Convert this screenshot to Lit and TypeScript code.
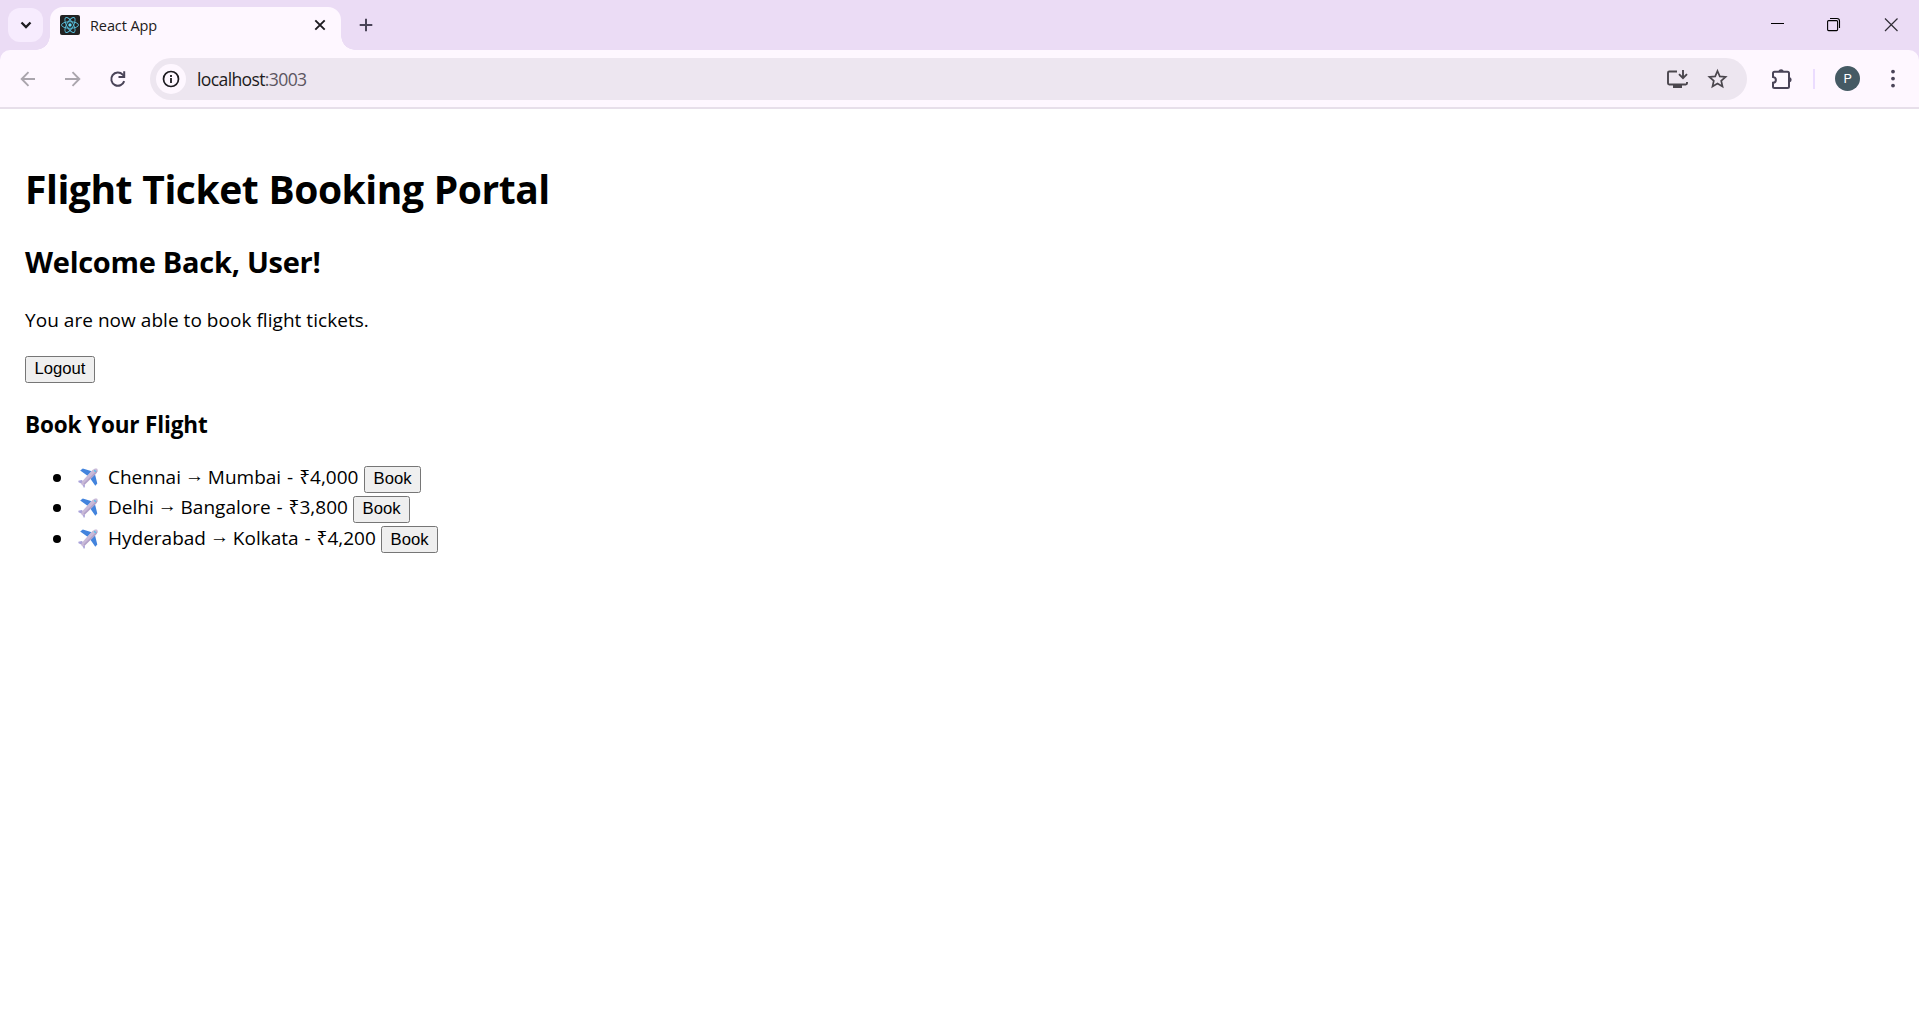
import { LitElement, html, css, svg } from "lit";
import { customElement } from "lit/decorators.js";

const plane = html`<svg class="plane" viewBox="0 0 20 20">
  <path d="M2.2 2.6 4.8.6l9 2.6-4.3 4.6zM17 6.2l2.3 9.2-2 2.4-5.2-7.6z" fill="#4384dd"/>
  <path d="M.3 12.800 3.800 12l3.200 3-.2 4.200-1 .6-1.600-3.900-3.700-1.600z" fill="#a9a2da"/>
  <path d="M19.2.8c1 1.2.3 3.3-1.3 5L7.3 16.3 4.700 17.600l-1.700-1.700 1.300-2.700L14.4 2C16 .4 18.100 0 19.2.8z" fill="#c9bad8"/>
  <path d="M19 2.200 5.500 15.600l1 1L17.900 5.800c1.400-1.400 1.800-2.700 1.100-3.600z" fill="#b3a2c9"/>
  <path d="m16.300 2.200 1.400 1.500" stroke="#48c3ee" stroke-width="1.300"/>
</svg>`;

const flights = [
  { from: "Chennai", to: "Mumbai", price: "4,000", key: "chennai" },
  { from: "Delhi", to: "Bangalore", price: "3,800", key: "delhi" },
  { from: "Hyderabad", to: "Kolkata", price: "4,200", key: "hyderabad" },
];

@customElement("browser-chrome")
class BrowserChrome extends LitElement {
  static styles = css`
    :host { display: block; font-family: "Open Sans", "Noto Sans", sans-serif; color: #1d1b20; }
    * { box-sizing: border-box; }
    svg { display: block; fill: none; flex: none; }
    .strip { height: 50px; background: #ebdcf5; display: flex; align-items: flex-start; }
    .search { width: 35px; height: 34px; margin: 8px 7px 0 8px; border-radius: 12px; background: #f7ecfe; display: grid; place-items: center; flex: none; }
    .tab { position: relative; width: 291px; height: 43px; margin-top: 7px; border-radius: 13px 13px 0 0; background: #fef7ff; display: flex; align-items: center; padding: 0 15px 7px 10px; flex: none; }
    .tab::before, .tab::after { content: ""; position: absolute; bottom: 0; width: 14px; height: 14px; }
    .tab::before { left: -14px; background: radial-gradient(circle at 0 0, transparent 13.500px, #fef7ff 14px); }
    .tab::after { right: -14px; background: radial-gradient(circle at 100% 0, transparent 13.500px, #fef7ff 14px); }
    .title { flex: 1; margin: 2px 0 0 10px; font-size: 14.500px; letter-spacing: -0.100px; line-height: 20px; }
    .plus { margin: 18px 0 0 18px; }
    .windows { margin-left: auto; display: flex; gap: 43px; padding: 17px 21px 0 0; }
    .base { background: #ebdcf5; }
    .bar { height: 57px; background: #fef7ff; border-radius: 10px 10px 0 0; display: flex; align-items: center; padding: 0 18px 0 18px; }
    .nav { display: flex; gap: 25px; width: 132px; align-items: center; }
    .address { flex: 1; height: 42px; border-radius: 21px; background: #ede6f0; display: flex; align-items: center; padding: 0 18px 0 6px; }
    .info { width: 30px; height: 30px; border-radius: 50%; background: #fef7ff; display: grid; place-items: center; }
    .url { flex: 1; margin-left: 11px; font-size: 17.600px; line-height: 26px; letter-spacing: -0.650px; padding-top: 1px; }
    .port { color: #5c5661; }
    .actions { display: flex; gap: 18px; }
    .tools { display: flex; align-items: center; width: 154px; flex: none; padding-left: 24px; }
    .sep { width: 2px; height: 20px; background: #ebdcff; margin-left: 20px; flex: none; }
    .avatar { width: 25px; height: 25px; flex: none; border-radius: 50%; background: #455a64; color: #fff; display: grid; place-items: center; font: 13px "Roboto", sans-serif; margin-left: 20px; }
    .menu { margin-left: 21px; }
    .edge { height: 2px; background: #e7dfea; }
  `;
  render() {
    return html`
      <div class="strip">
        <div class="search"><svg width="12" height="8" viewBox="0 0 12 8"><path d="m1.500 1.500 4.500 4.500 4.500-4.500" stroke="#1d1b20" stroke-width="2.300"/></svg></div>
        <div class="tab">
          <svg width="20" height="20" viewBox="0 0 20 20"><rect width="20" height="20" rx="2" fill="#222"/>
            ${[0, 60, 120].map((a) => svg`<ellipse cx="10" cy="10" rx="8.500" ry="3.300" transform="rotate(${a} 10 10)" stroke="#58bfdc" stroke-width=".9"/>`)}
            <circle cx="10" cy="10" r="1.700" fill="#61dafb"/></svg>
          <span class="title">React App</span>
          <svg width="12" height="12" viewBox="0 0 12 12"><path d="m1.300 1.300 9.400 9.400m0-9.400-9.400 9.400" stroke="#1d1b20" stroke-width="1.900"/></svg>
        </div>
        <svg class="plus" width="14" height="14" viewBox="0 0 14 14"><path d="M7 .7v12.600M.7 7h12.600" stroke="#4a4458" stroke-width="2"/></svg>
        <div class="windows">
          <svg width="14" height="15" viewBox="0 0 14 15"><path d="M1 6.500h13" stroke="#000"/></svg>
          <svg width="14" height="15" viewBox="0 0 14 15"><rect x=".6" y="3.600" width="10" height="10" rx="1" stroke="#000" stroke-width="1.100"/><path d="M3 1.500h7q2.500 0 2.500 2.500v7" stroke="#000" stroke-width="1.100"/></svg>
          <svg width="14" height="15" viewBox="0 0 14 15"><path d="m1 1.500 12.500 12.500m0-12.500L1 14" stroke="#302c35" stroke-width="1.200"/></svg>
        </div>
      </div>
      <div class="base"><div class="bar">
        <div class="nav">
          <svg width="20" height="20" viewBox="0 0 20 20"><path d="M17 10H4m6.500-6.800L3.700 10l6.800 6.800" stroke="#aaa5ad" stroke-width="1.900"/></svg>
          <svg width="20" height="20" viewBox="0 0 20 20"><path d="M2 10h14m-6.500-6.800 6.800 6.800-6.800 6.800" stroke="#aaa5ad" stroke-width="1.900"/></svg>
          <svg width="20" height="20" viewBox="0 0 20 20"><path d="M16.200 12.100a6.600 6.600 0 1 1-1.500-6.500l1.800 1.800" stroke="#4a4458" stroke-width="2"/><path d="M16.200 2.300v5.700h-5.700" stroke="#4a4458" stroke-width="2"/></svg>
        </div>
        <div class="address">
          <div class="info"><svg width="18" height="18" viewBox="0 0 18 18"><circle cx="9" cy="9" r="7.500" stroke="#1d1b20" stroke-width="1.700"/><path d="M9 8v5M9 5v1.900" stroke="#1d1b20" stroke-width="1.800"/></svg></div>
          <div class="url">localhost<span class="port">:3003</span></div>
          <div class="actions">
            <svg width="24" height="22" viewBox="0 0 24 22"><path d="M12 3.500H4.200Q3 3.500 3 4.700v10.600q0 1.200 1.200 1.200h16.600q1.200 0 1.200-1.200V14M18 2v8m-4-3.800 4 4 4-4" stroke="#4a464d" stroke-width="1.900"/><path d="M8 17h9v3H8z" fill="#4a464d"/></svg>
            <svg width="22" height="22" viewBox="0 0 22 22"><path d="m10.500 3 2.300 5.400 5.800.5-4.400 3.900 1.300 5.700-5-3-5 3 1.300-5.700-4.400-3.900 5.800-.5z" stroke="#4a464d" stroke-width="1.700"/></svg>
          </div>
        </div>
        <div class="tools">
          <svg width="22" height="24" viewBox="0 0 22 24"><path d="M3.500 4.800h13q1.500 0 1.500 1.500v13.200q0 1.500-1.500 1.500h-13Q2 21 2 19.500v-3.800q2.900-.3 2.900-2.800T2 10V6.300q0-1.500 1.500-1.500z" stroke="#4a4458" stroke-width="2"/><path d="M7.300 4.500a2.900 2.900 0 0 1 5.600 0zM18.500 10a2.900 2.900 0 0 1 0 5.600z" fill="#4a4458"/></svg>
          <div class="sep"></div>
          <div class="avatar">P</div>
          <svg class="menu" width="24" height="20" viewBox="0 0 24 20"><g fill="#4a4458"><circle cx="12" cy="2.600" r="1.900"/><circle cx="12" cy="9.600" r="1.900"/><circle cx="12" cy="16.600" r="1.900"/></g></svg>
        </div>
      </div></div>
      <div class="edge"></div>`;
  }
}

@customElement("app-root")
class AppRoot extends LitElement {
  static styles = css`
    :host { display: block; height: 1017px; background: #fff; color: #000; overflow: hidden; font-family: "Open Sans", "Noto Sans", sans-serif; }
    * { box-sizing: border-box; }
    main { padding: 53px 25px; }
    h1, h2, h3, p, ul { margin: 0; white-space: nowrap; }
    h1 { font-size: 39px; line-height: 53px; letter-spacing: -0.450px; word-spacing: 0.500px; }
    h2 { font-size: 29px; line-height: 40px; margin-top: 27px; letter-spacing: -0.270px; }
    p { font-size: 19px; line-height: 27px; margin-top: 25px; letter-spacing: 0.040px; }
    h3 { font-size: 22.500px; line-height: 31px; margin-top: 26px; letter-spacing: -0.150px; }
    button { display: block; font: 16.667px "Liberation Sans", Arial, sans-serif; color: #000; background: #efefef; border: 1px solid #767676; border-radius: 2.500px; padding: 0; height: 27px; }
    .logout { width: 70px; margin-top: 22px; padding-bottom: 2px; }
    .book { width: 57px; height: 27px; position: relative; top: 1px; }
    ul { list-style: none; padding: 0 0 0 29px; margin-top: 23px; }
    li { height: 30.300px; display: flex; align-items: center; font-size: 19px; line-height: 27px; }
    .dot { width: 8px; height: 8px; border-radius: 50%; background: #000; margin: 0 17px 0 -1px; }
    .plane { width: 20px; height: 20px; margin-right: 10px; }
    .route { margin-right: 5px; white-space: pre; position: relative; top: -0.500px; }
    .arrow { position: relative; top: -2px; margin: 0 -1px; }
    .chennai { width: 251px; }
    .delhi { width: 240px; }
    .hyderabad { width: 268px; }
    .dash { margin: 0 1px; }
  `;
  render() {
    return html`
      <browser-chrome></browser-chrome>
      <main>
        <h1>Flight Ticket Booking Portal</h1>
        <h2>Welcome Back, User!</h2>
        <p>You are now able to book flight tickets.</p>
        <button class="logout">Logout</button>
        <h3>Book Your Flight</h3>
        <ul>${flights.map((f) => html`<li>
          <span class="dot"></span>${plane}
          <span class="route ${f.key}">${f.from} <span class="arrow">→</span> ${f.to} <span class="dash">-</span> ₹${f.price}</span>
          <button class="book">Book</button>
        </li>`)}</ul>
      </main>`;
  }
}
